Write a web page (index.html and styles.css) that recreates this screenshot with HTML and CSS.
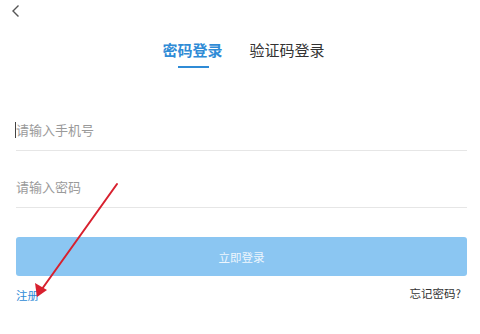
FILE: index.html
```html
<!DOCTYPE html>
<html lang="zh">
<head>
<meta charset="utf-8">
<link rel="stylesheet" href="styles.css">
</head>
<body>
<div class="page">
  <div class="topbar">
    <svg class="back" width="10" height="14" viewBox="0 0 10 14"><path d="M7.5 1.5 L2 7 L7.5 12.5" fill="none" stroke="#555" stroke-width="1.4"/></svg>
  </div>
  <div class="tabs">
    <div class="tab active">密码登录<span class="bar"></span></div>
    <div class="tab">验证码登录</div>
  </div>
  <div class="form">
    <div class="field first"><span class="caret"></span><span class="ph">请输入手机号</span></div>
    <div class="field second"><span class="ph">请输入密码</span></div>
    <div class="btn">立即登录</div>
    <div class="links">
      <span class="reg">注册</span>
      <span class="forgot">忘记密码?</span>
    </div>
  </div>
  <svg class="arrow" width="480" height="334" viewBox="0 0 480 334">
    <line x1="117" y1="184" x2="42" y2="289" stroke="#d8202e" stroke-width="2" stroke-linecap="round"/>
    <polygon points="37,297 35,283 47,290" fill="#d8202e"/>
  </svg>
</div>
</body>
</html>
```
FILE: styles.css
```css
html, body {
  margin: 0;
  padding: 0;
  background: #fff;
}
body {
  font-family: "Noto Sans CJK SC", "Noto Sans", sans-serif;
}
.page {
  position: relative;
  width: 480px;
  height: 334px;
  overflow: hidden;
}
.topbar {
  height: 22px;
  padding: 4px 0 0 11px;
  box-sizing: border-box;
}
.back {
  display: block;
}
.tabs {
  display: flex;
  justify-content: center;
  gap: 27px;
  margin-top: 17px;
  padding-left: 7px;
}
.tab {
  position: relative;
  font-size: 15px;
  line-height: 22px;
  color: #333;
}
.tab.active {
  color: #2f8bd6;
  font-weight: 600;
}
.bar {
  position: absolute;
  left: 16px;
  top: 27px;
  width: 31px;
  height: 2px;
  background: #2f8bd6;
}
.form {
  padding: 0 13px 0 16px;
  margin-top: 49px;
}
.field {
  position: relative;
  border-bottom: 1px solid #e6e6e6;
  display: flex;
  box-sizing: border-box;
}
.field.first {
  height: 41px;
  align-items: center;
}
.field.second {
  height: 57px;
  align-items: flex-end;
  padding-bottom: 11px;
}
.ph {
  font-size: 13px;
  color: #9a9a9a;
  line-height: 18px;
}
.caret {
  position: absolute;
  left: -1px;
  top: 12px;
  width: 1px;
  height: 16px;
  background: #444;
}
.btn {
  margin-top: 29px;
  height: 39px;
  border-radius: 3px;
  background: #8bc6f2;
  color: #eef6fd;
  font-size: 11.5px;
  display: flex;
  align-items: center;
  justify-content: center;
}
.links {
  display: flex;
  justify-content: space-between;
  margin-top: 10px;
  font-size: 11.5px;
  line-height: 14px;
}
.reg {
  color: #2f8bd6;
  margin-top: 2px;
}
.forgot {
  color: #333;
  margin-right: 6px;
}
.arrow {
  position: absolute;
  left: 0;
  top: 0;
  pointer-events: none;
}
```
